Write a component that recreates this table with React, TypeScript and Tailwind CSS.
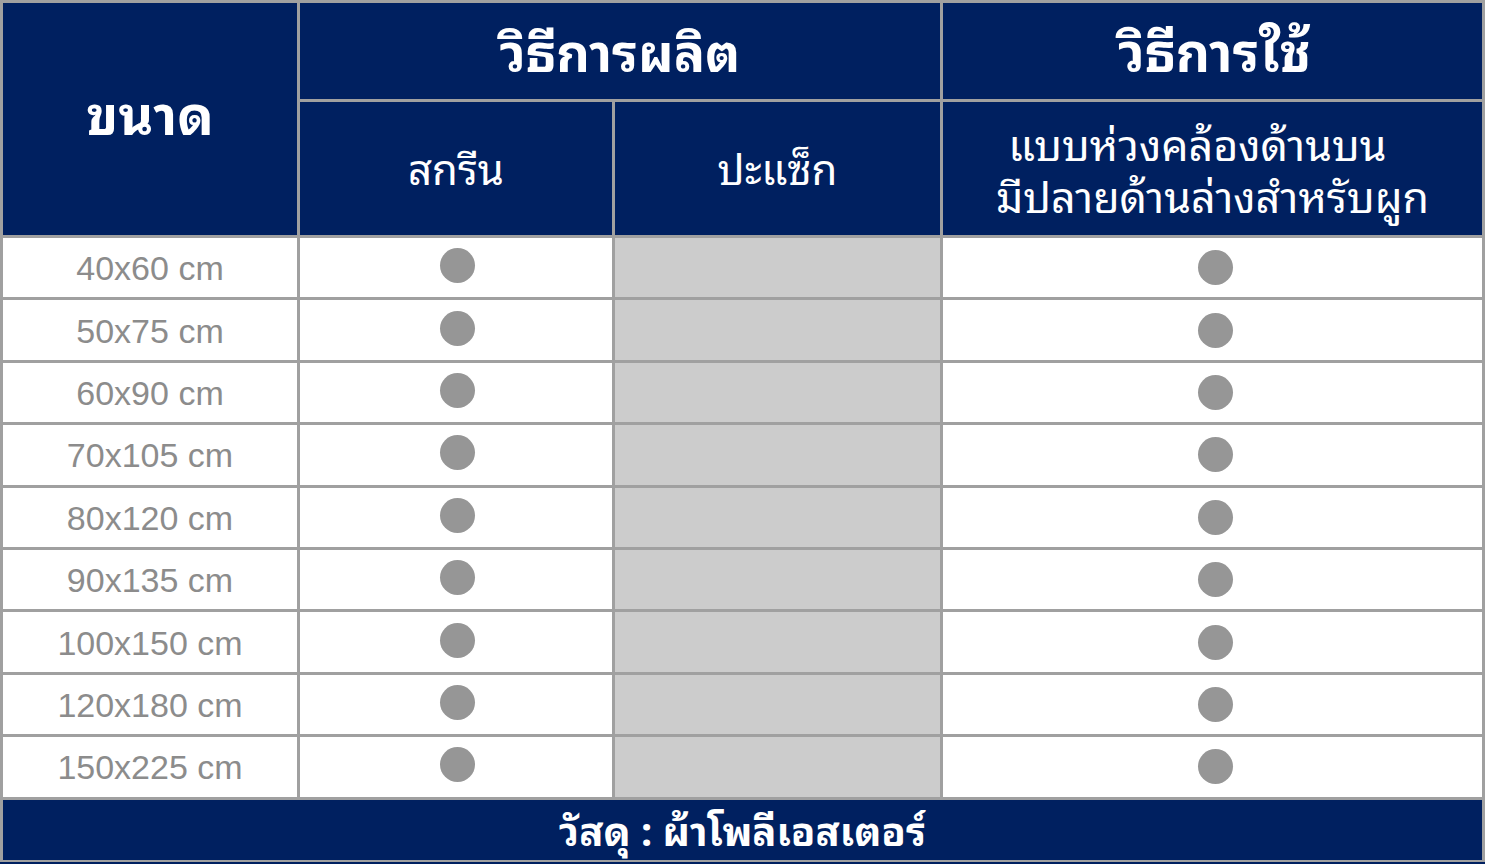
const sizes = [
  "40x60 cm",
  "50x75 cm",
  "60x90 cm",
  "70x105 cm",
  "80x120 cm",
  "90x135 cm",
  "100x150 cm",
  "120x180 cm",
  "150x225 cm",
];

const thai = {
  fontFamily:
    'Tahoma, "Noto Sans Thai Looped", Loma, Garuda, Waree, Umpush, "Noto Sans Thai", "Liberation Sans", sans-serif',
};

function Dot() {
  return <span className="block h-[35px] w-[35px] rounded-full bg-[#969696]" />;
}

export default function App() {
  return (
    <div className="h-[864px] w-[1485px] overflow-hidden bg-[#002060]" style={thai}>
      <div className="grid grid-cols-[294px_312px_325px_539px] grid-rows-[96px_133px_repeat(9,59.4px)_60px] gap-[3px] bg-[#a0a0a0] p-[3px] pb-[2px]">
        {/* header */}
        <div className="row-span-2 flex items-center justify-center bg-[#002060] pb-[18px] text-[54px] font-bold text-white">
          ขนาด
        </div>
        <div className="col-span-2 flex items-center justify-center bg-[#002060] pb-[4px] text-[52px] font-bold text-white">
          วิธีการผลิต
        </div>
        <div className="flex items-center justify-center bg-[#002060] pb-[4px] pl-[4px] text-[53px] font-bold text-white">
          วิธีการใช้
        </div>
        <div className="flex items-center justify-center bg-[#002060] pb-[4px] text-[42px] text-white">
          สกรีน
        </div>
        <div className="flex items-center justify-center bg-[#002060] pb-[4px] text-[42px] text-white">
          ปะแซ็ก
        </div>
        <div className="flex flex-col items-center justify-center bg-[#002060] pb-[2px] text-[43px] leading-[52px] text-white">
          <span className="pr-[30px]">แบบห่วงคล้องด้านบน</span>
          <span>มีปลายด้านล่างสำหรับผูก</span>
        </div>

        {/* rows */}
        {sizes.map((s) => (
          <div key={s} className="contents">
            <div
              className="flex items-center justify-center bg-white pt-[2px] text-[34px] text-[#8c8c8c]"
              style={{ fontFamily: 'Tahoma, "Liberation Sans", sans-serif' }}
            >
              {s}
            </div>
            <div className="flex items-center justify-center bg-white pb-[4px] pl-[3px]">
              <Dot />
            </div>
            <div className="bg-[#cccccc]" />
            <div className="flex items-center justify-center bg-white pl-[5px]">
              <Dot />
            </div>
          </div>
        ))}

        {/* footer */}
        <div className="col-span-4 flex items-center justify-center bg-[#002060] pb-[4px] text-[40px] font-bold text-white">
          วัสดุ : ผ้าโพลีเอสเตอร์
        </div>
      </div>
    </div>
  );
}
